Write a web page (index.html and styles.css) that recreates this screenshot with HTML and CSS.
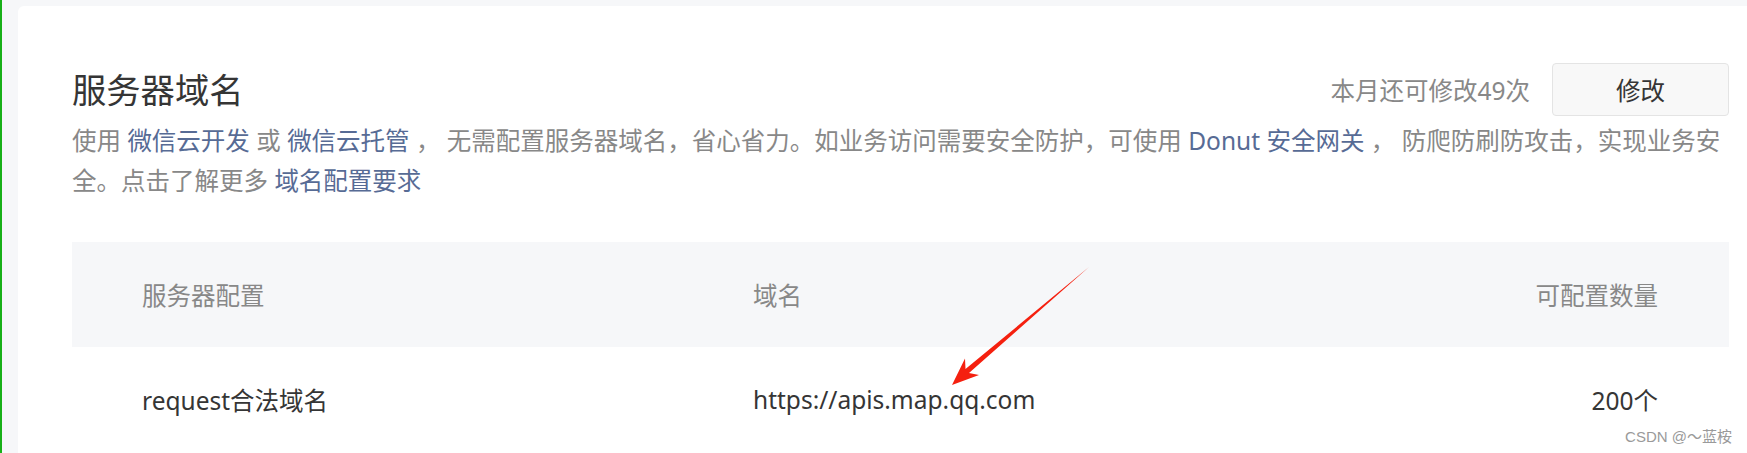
FILE: index.html
```html
<!DOCTYPE html>
<html lang="zh-CN">
<head>
    <meta charset="UTF-8">
    <meta name="viewport" content="width=device-width, initial-scale=1.0">
    <title>服务器域名</title>
    <link rel="stylesheet" href="styles.css">
</head>
<body>
    <div class="page">
        <div class="card">
            <div class="card-head">
                <div class="title">服务器域名</div>
                <div class="actions">
                    <span class="quota">本月还可修改49次</span>
                    <button class="btn">修改</button>
                </div>
            </div>

            <p class="desc">使用 <a href="#">微信云开发</a> 或 <a href="#">微信云托管</a> ， 无需配置服务器域名，省心省力。如业务访问需要安全防护，可使用 <a href="#">Donut 安全网关</a> ， 防爬防刷防攻击，实现业务安全。点击了解更多 <a href="#">域名配置要求</a></p>

            <div class="table">
                <div class="row head">
                    <div class="cell">服务器配置</div>
                    <div class="cell">域名</div>
                    <div class="cell num">可配置数量</div>
                </div>
                <div class="row">
                    <div class="cell">request合法域名</div>
                    <div class="cell">https://apis.map.qq.com</div>
                    <div class="cell num">200个</div>
                </div>
            </div>
        </div>
    </div>

    <!-- annotation arrow drawn over the screenshot -->
    <svg class="arrow" width="1747" height="453" viewBox="0 0 1747 453">
        <polygon points="952,385 979,375 969,373 1089,267 965.5,369 965,358.5" fill="#f5200f"/>
    </svg>

    <div class="watermark">CSDN @～蓝桉</div>
</body>
</html>
```

FILE: styles.css
```css
body {
    margin: 0;
    overflow: hidden;
    background: #f6f7f9;
    font-family: "Noto Sans", "Noto Sans CJK SC", sans-serif;
    color: #353535;
    position: relative;
    height: 100vh;
}

.page {
    display: flex;
    height: 100%;
    box-sizing: border-box;
    padding: 6px 0 0 16px;
    border-left: 2px solid #18b018;
}

.card {
    flex-shrink: 0;
    width: 1765px;
    box-sizing: border-box;
    padding: 57px 54px 0;
    background: #fff;
    border-radius: 6px 0 0 0;
}

.card-head {
    display: flex;
    align-items: center;
    justify-content: space-between;
}

.title {
    font-size: 34.3px;
    line-height: 48px;
    color: #353535;
}

.actions {
    display: flex;
    align-items: center;
    gap: 22px;
}

.quota {
    font-size: 24.5px;
    color: #888;
}

.btn {
    width: 177px;
    height: 53px;
    background: #f8f8f8;
    border: 1px solid #e4e4e4;
    border-radius: 4px;
    font-family: inherit;
    font-size: 24.5px;
    color: #353535;
    cursor: pointer;
}

.desc {
    margin: 5px 0 0;
    font-size: 24.5px;
    line-height: 40px;
    color: #888;
}

.desc a {
    color: #576b95;
    text-decoration: none;
}

.table {
    margin-top: 41px;
}

.row {
    display: grid;
    grid-template-columns: 611px 1fr auto;
    align-items: center;
    height: 105px;
    font-size: 24.5px;
}

.row.head {
    background: #f6f7f9;
    color: #888;
}

.cell {
    padding: 0 70px;
}

.cell.num {
    padding: 0 71px 0 0;
    text-align: right;
}

.arrow {
    position: absolute;
    left: 0;
    top: 0;
    pointer-events: none;
}

.watermark {
    position: absolute;
    right: 15px;
    bottom: 7px;
    font-family: "Liberation Sans", "Noto Sans CJK SC", sans-serif;
    font-size: 15px;
    color: #9a9a9a;
}
```
